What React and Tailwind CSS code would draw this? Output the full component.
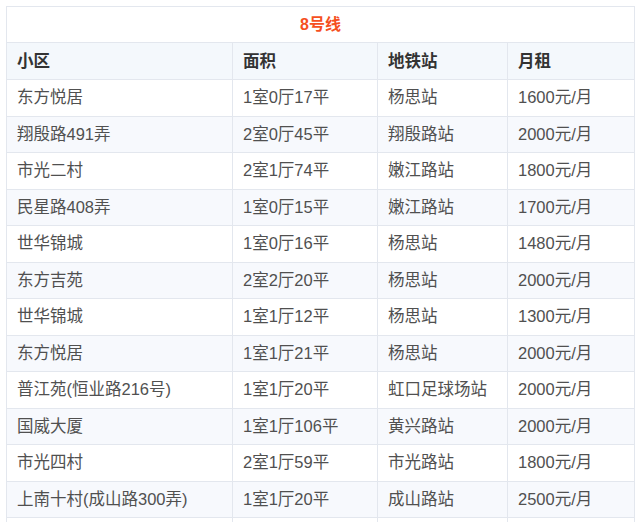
import React from 'react';

const rows = [
  ['东方悦居', '1室0厅17平', '杨思站', '1600元/月'],
  ['翔殷路491弄', '2室0厅45平', '翔殷路站', '2000元/月'],
  ['市光二村', '2室1厅74平', '嫩江路站', '1800元/月'],
  ['民星路408弄', '1室0厅15平', '嫩江路站', '1700元/月'],
  ['世华锦城', '1室0厅16平', '杨思站', '1480元/月'],
  ['东方吉苑', '2室2厅20平', '杨思站', '2000元/月'],
  ['世华锦城', '1室1厅12平', '杨思站', '1300元/月'],
  ['东方悦居', '1室1厅21平', '杨思站', '2000元/月'],
  ['普江苑(恒业路216号)', '1室1厅20平', '虹口足球场站', '2000元/月'],
  ['国威大厦', '1室1厅106平', '黄兴路站', '2000元/月'],
  ['市光四村', '2室1厅59平', '市光路站', '1800元/月'],
  ['上南十村(成山路300弄)', '1室1厅20平', '成山路站', '2500元/月'],
  ['', '', '', ''],
];

const headers = ['小区', '面积', '地铁站', '月租'];

const App = () => {
  return (
    <div
      className="w-[640px] h-[522px] overflow-hidden bg-white pt-[6px] pl-[6px]"
      style={{ fontFamily: '"Liberation Sans", "Noto Sans CJK SC", sans-serif' }}
    >
      <table className="w-[628px] table-fixed border-collapse text-[16.5px] text-[#505050]">
        <colgroup>
          <col className="w-[226px]" />
          <col className="w-[145px]" />
          <col className="w-[130px]" />
          <col className="w-[127px]" />
        </colgroup>
        <thead>
          <tr>
            <th
              colSpan={4}
              className="h-[36px] border border-[#e3e7ee] bg-white text-center text-[16px] font-bold text-[#f5501e]"
            >
              8号线
            </th>
          </tr>
          <tr className="bg-[#f4f8fc]">
            {headers.map((h) => (
              <th
                key={h}
                className="h-[37px] border border-[#e3e7ee] px-[10px] text-left font-bold text-[#333]"
              >
                {h}
              </th>
            ))}
          </tr>
        </thead>
        <tbody>
          {rows.map((r, i) => (
            <tr key={i} className={i % 2 === 1 ? 'bg-[#f7f9fd]' : 'bg-white'}>
              {r.map((c, j) => (
                <td
                  key={j}
                  className="h-[36.5px] border border-[#e3e7ee] px-[10px] whitespace-nowrap"
                >
                  {c}
                </td>
              ))}
            </tr>
          ))}
        </tbody>
      </table>
    </div>
  );
};

export default App;
